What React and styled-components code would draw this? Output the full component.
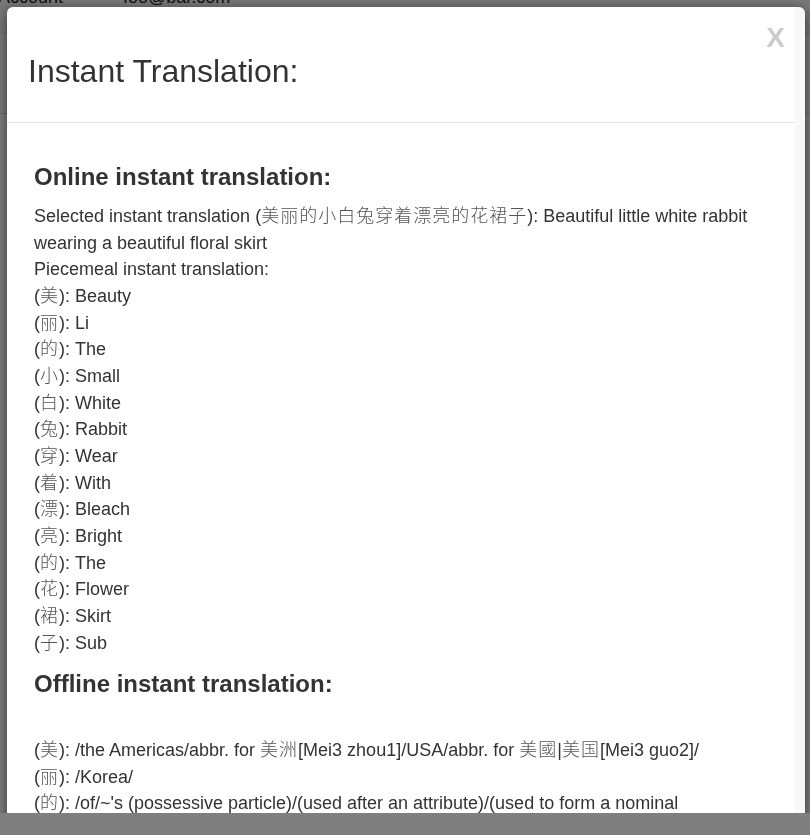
import React from "react";
import styled, { createGlobalStyle } from "styled-components";

const GlobalStyle = createGlobalStyle`
  html, body {
    margin: 0;
    padding: 0;
    height: 100%;
    overflow: hidden;
  }
  body {
    font-family: "Liberation Sans", "Noto Sans CJK SC", sans-serif;
    color: #333;
    background: #fff;
  }
`;

const Page = styled.div`
  height: 100vh;
  background: #fff;
`;

const NavBar = styled.nav`
  display: flex;
  align-items: flex-start;
  gap: 44px;
  height: 45px;
  margin-top: -12px;
  background: #f4f4f4;
  border-bottom: 1px solid #e2e2e2;
  font-size: 18px;
  line-height: 18px;
  color: #222;
`;

const NavItem = styled.span`
  display: flex;
  align-items: center;
  gap: 6px;
  margin-left: ${(p) => p.$offset || 0}px;
  height: 18px;
`;

const Caret = styled.span`
  font-size: 10px;
`;

const SubBar = styled.div`
  height: 79px;
  border-bottom: 1px solid #ddd;
  background: #fafafa;
`;

const Backdrop = styled.div`
  position: fixed;
  inset: 0;
  background: rgba(0, 0, 0, 0.5);
`;

const ModalFrame = styled.div`
  position: fixed;
  top: 0;
  left: 0;
  right: 0;
  bottom: 22px;
  overflow: hidden;
`;

const Dialog = styled.div`
  margin: 7px 5px 0 7px;
  height: 1000px;
  background: #fff;
  border-right: 10px solid #f7f8fb;
  border-radius: 6px 6px 0 0;
  box-shadow: 0 3px 14px rgba(0, 0, 0, 0.6);
  display: flex;
  flex-direction: column;
`;

const Header = styled.div`
  display: flex;
  align-items: flex-start;
  justify-content: space-between;
  padding: 17px 10px 33px 21px;
  border-bottom: 1px solid #e5e5e5;
`;

const Title = styled.h4`
  margin: 30px 0 0;
  font-size: 32px;
  line-height: 35px;
  font-weight: 400;
  color: #333;
`;

const CloseButton = styled.button`
  border: 0;
  background: transparent;
  padding: 0;
  margin: 0;
  font-family: "Liberation Sans", sans-serif;
  font-size: 28px;
  line-height: 28px;
  font-weight: 700;
  color: #000;
  opacity: 0.2;
  cursor: pointer;
`;

const Body = styled.div`
  padding: 27px 26px 0 27px;
`;

const SectionTitle = styled.h3`
  margin: 15px 0 12.5px;
  font-size: 24px;
  line-height: 26.4px;
  font-weight: 700;
  color: #333;
  &:first-child {
    margin-top: 14px;
  }
`;

const Lines = styled.div`
  font-size: 18px;
  line-height: 26.67px;
  color: #333;
`;

const Line = styled.div`
  min-height: 26.67px;
`;

const Han = styled.span`
  font-family: "Noto Sans CJK SC", sans-serif;
  font-weight: 300;
  line-height: 1;
  letter-spacing: 1px;
  color: #555;
`;

const pieces = [
  ["美", "Beauty"],
  ["丽", "Li"],
  ["的", "The"],
  ["小", "Small"],
  ["白", "White"],
  ["兔", "Rabbit"],
  ["穿", "Wear"],
  ["着", "With"],
  ["漂", "Bleach"],
  ["亮", "Bright"],
  ["的", "The"],
  ["花", "Flower"],
  ["裙", "Skirt"],
  ["子", "Sub"],
];

export default function App() {
  return (
    <>
      <GlobalStyle />
      <Page>
        <NavBar>
          <NavItem $offset={-2}>
            Account <Caret>▼</Caret>
          </NavItem>
          <NavItem>foo@bar.com</NavItem>
        </NavBar>
        <SubBar />
      </Page>
      <Backdrop />
      <ModalFrame>
        <Dialog>
          <Header>
            <Title>Instant Translation:</Title>
            <CloseButton aria-label="Close">X</CloseButton>
          </Header>
          <Body>
            <SectionTitle>Online instant translation:</SectionTitle>
            <Lines>
              <Line>
                Selected instant translation (<Han>美丽的小白兔穿着漂亮的花裙子</Han>): Beautiful little white rabbit wearing a beautiful floral skirt
              </Line>
              <Line>Piecemeal instant translation:</Line>
              {pieces.map(([ch, en], i) => (
                <Line key={i}>
                  (<Han>{ch}</Han>): {en}
                </Line>
              ))}
            </Lines>
            <SectionTitle>Offline instant translation:</SectionTitle>
            <Lines>
              <Line />
              <Line>
                (<Han>美</Han>): /the Americas/abbr. for <Han>美洲</Han>[Mei3 zhou1]/USA/abbr. for <Han>美國</Han>|<Han>美国</Han>[Mei3 guo2]/
              </Line>
              <Line>
                (<Han>丽</Han>): /Korea/
              </Line>
              <Line>
                (<Han>的</Han>): /of/~'s (possessive particle)/(used after an attribute)/(used to form a nominal expression)/(used at the end of a declarative sentence for emphasis)/
              </Line>
              <Line>
                (<Han>小</Han>): /small/tiny/few/young/
              </Line>
            </Lines>
          </Body>
        </Dialog>
      </ModalFrame>
    </>
  );
}
